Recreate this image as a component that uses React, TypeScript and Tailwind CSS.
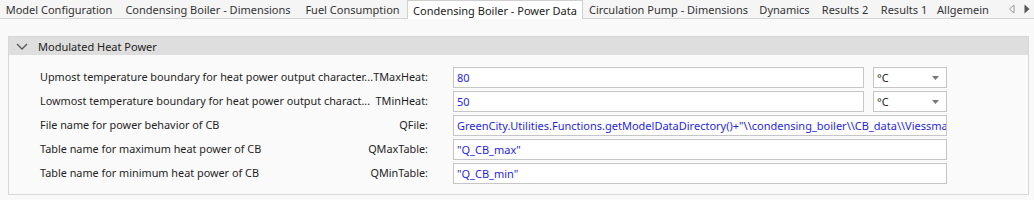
const tabs = [
  { label: "Model Configuration", w: "w-[118px]" },
  { label: "Condensing Boiler - Dimensions", w: "w-[180px]" },
  { label: "Fuel Consumption", w: "w-[109px]" },
  { label: "Condensing Boiler - Power Data", w: "w-[176px]", active: true },
  { label: "Circulation Pump - Dimensions", w: "w-[171px]" },
  { label: "Dynamics", w: "w-[61px]" },
  { label: "Results 2", w: "w-[60px]" },
  { label: "Results 1", w: "w-[58px]" },
  { label: "Allgemein", w: "w-[60px]" },
];

const rows = [
  {
    desc: "Upmost temperature boundary for heat power output character...",
    name: "TMaxHeat:",
    value: "80",
    unit: "°C",
  },
  {
    desc: "Lowmost temperature boundary for heat power output charact...",
    name: "TMinHeat:",
    value: "50",
    unit: "°C",
  },
  {
    desc: "File name for power behavior of CB",
    name: "QFile:",
    value:
      'GreenCity.Utilities.Functions.getModelDataDirectory()+"\\\\condensing_boiler\\\\CB_data\\\\Viessma',
  },
  {
    desc: "Table name for maximum heat power of CB",
    name: "QMaxTable:",
    value: '"Q_CB_max"',
  },
  {
    desc: "Table name for minimum heat power of CB",
    name: "QMinTable:",
    value: '"Q_CB_min"',
  },
];

function TabBar() {
  return (
    <div className="flex h-[19px] items-stretch border-b border-[#d4d4d4] bg-[#f5f5f5] text-[11px]">
      {tabs.map((t) =>
        t.active ? (
          <div
            key={t.label}
            className={`${t.w} -mb-px flex h-[19px] shrink-0 items-center justify-center border-x border-t border-[#cfcfcf] bg-white text-[#222]`}
          >
            {t.label}
          </div>
        ) : (
          <div
            key={t.label}
            className={`${t.w} flex shrink-0 items-center justify-center text-[#333]`}
          >
            {t.label}
          </div>
        )
      )}
      <div className="ml-auto flex items-center gap-[9px] pr-[4px]">
        <svg width="7" height="10" viewBox="0 0 7 10">
          <path d="M6 1 L1.5 5 L6 9 Z" fill="none" stroke="#9a9a9a" strokeWidth="1" />
        </svg>
        <svg width="6" height="10" viewBox="0 0 6 10">
          <path d="M0.5 0.5 L5.5 5 L0.5 9.5 Z" fill="#555" />
        </svg>
      </div>
    </div>
  );
}

function Row({ r }: { r: (typeof rows)[number] }) {
  return (
    <div className="flex h-[21px] items-center">
      <div className="flex w-[388px] shrink-0 items-center text-[10.85px] text-[#1e1e1e]">
        <span className="min-w-0 flex-1 whitespace-nowrap">{r.desc}</span>
        <span className="shrink-0">{r.name}</span>
      </div>
      <div className="ml-[25px] flex h-full w-[494px] gap-[9px]">
        <div className="flex h-full min-w-0 flex-1 items-center overflow-hidden whitespace-nowrap border border-[#c6c6c6] bg-white pl-[3px] text-[#1f1fe6]">
          {r.value}
        </div>
        {r.unit && (
          <div className="flex h-full w-[74px] shrink-0 items-center justify-between border border-[#c6c6c6] bg-white pl-[3px] pr-[7px] text-[#1e1e1e]">
            <span>{r.unit}</span>
            <svg width="7" height="4" viewBox="0 0 7 4">
              <path d="M0 0 H7 L3.5 4 Z" fill="#777" />
            </svg>
          </div>
        )}
      </div>
    </div>
  );
}

export default function App() {
  return (
    <div
      className="h-[200px] w-[1034px] overflow-hidden bg-[#f9f9f9] text-[11px] leading-none"
      style={{ fontFamily: '"Noto Sans", "Open Sans", sans-serif' }}
    >
      <TabBar />
      <div className="pl-[8px] pr-[5px] pt-[17px]">
        <div className="border border-[#d8d8d8] bg-[#fafafa]">
          <div className="flex h-[18px] items-center bg-[#dedede] pl-[7px] text-[#222]">
            <svg width="12" height="7" viewBox="0 0 12 7" className="mr-[10px]">
              <path d="M1 1 L6 6 L11 1" fill="none" stroke="#555" strokeWidth="1.3" />
            </svg>
            <span>Modulated Heat Power</span>
          </div>
          <div className="flex flex-col gap-[3px] pb-[10px] pl-[31px] pt-[12px]">
            {rows.map((r) => (
              <Row key={r.name} r={r} />
            ))}
          </div>
        </div>
      </div>
    </div>
  );
}
